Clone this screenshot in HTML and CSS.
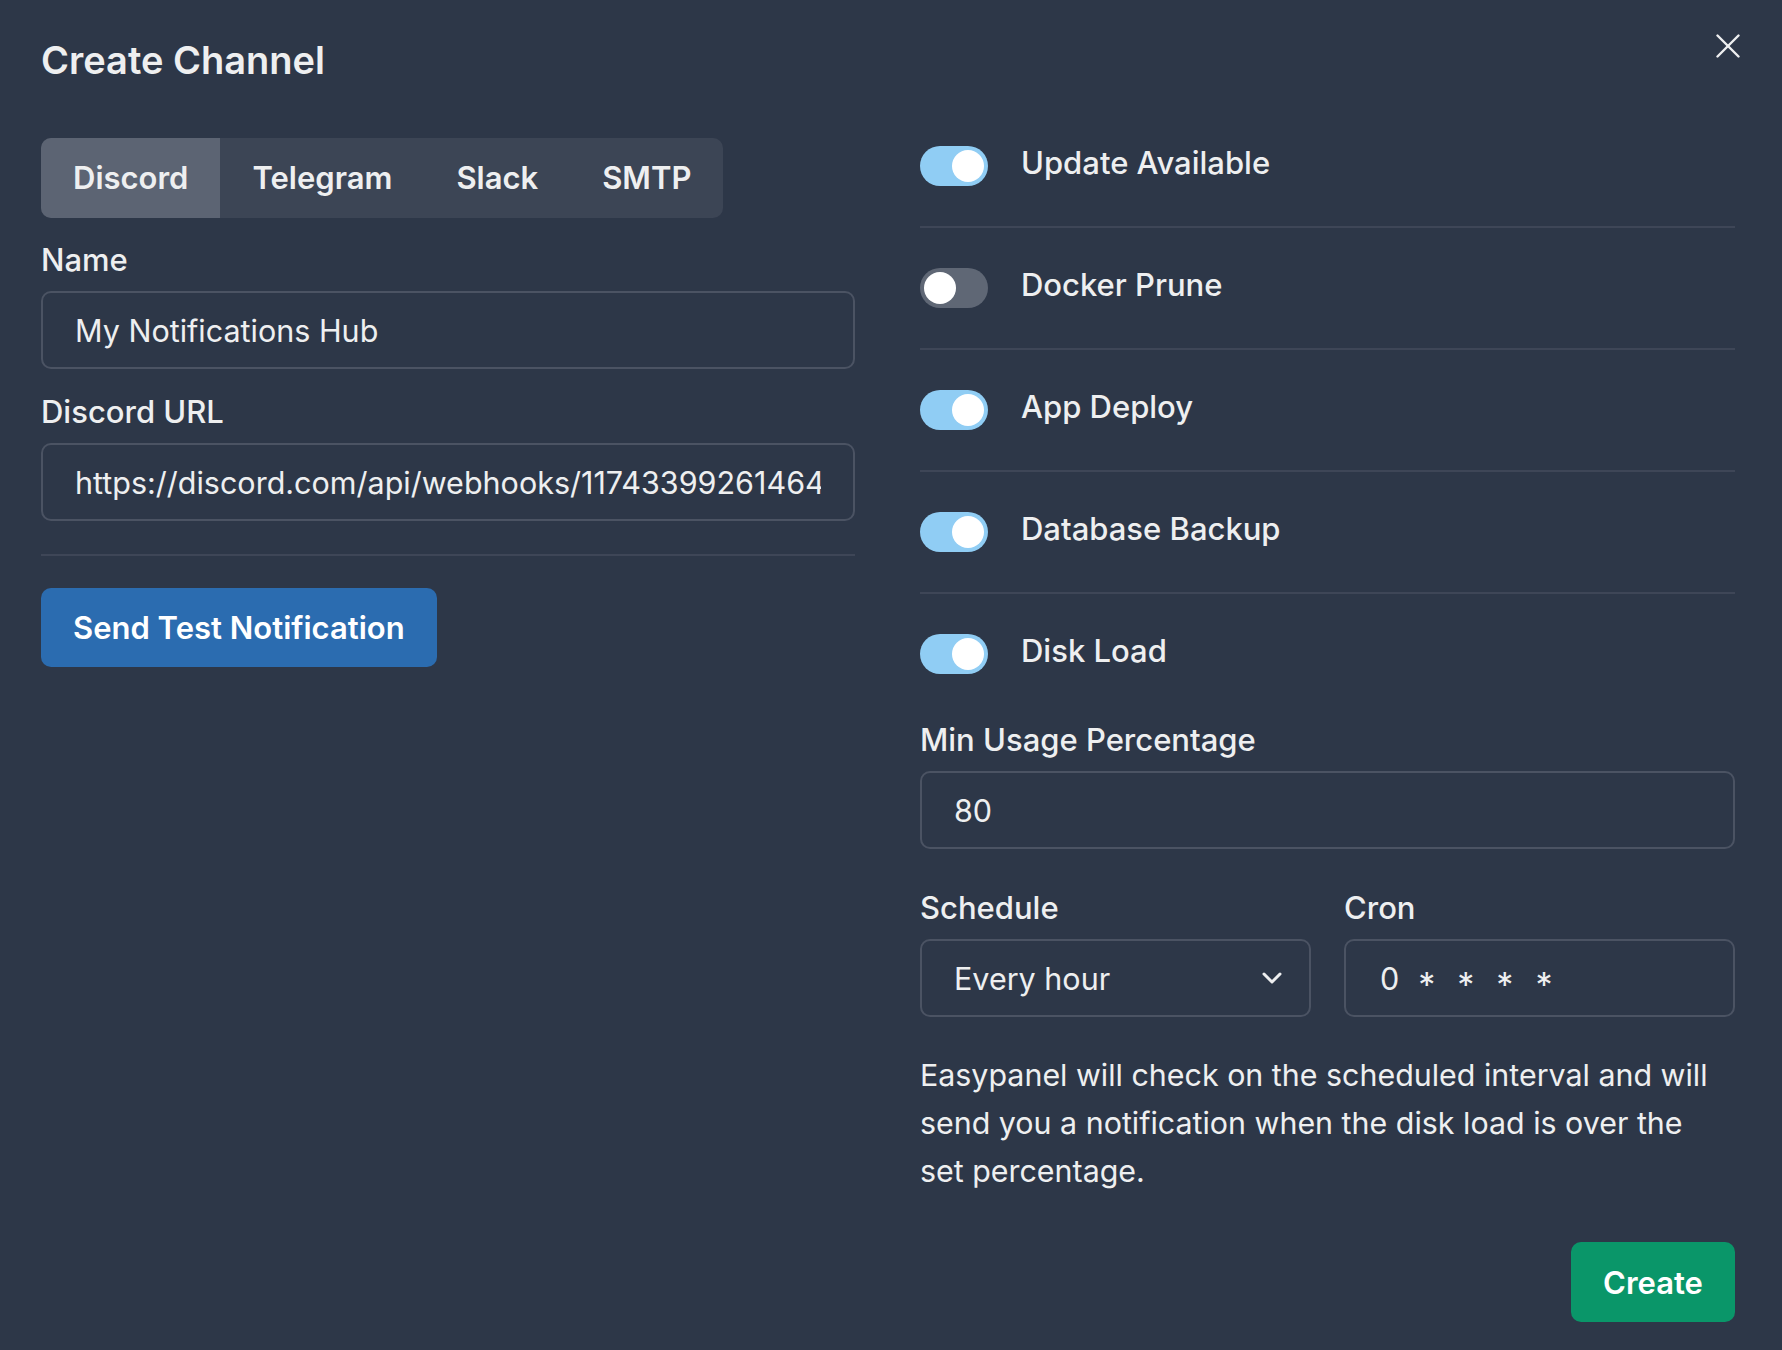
FILE: index.html
```html
<!DOCTYPE html>
<html lang="en">
<head>
<meta charset="utf-8">
<title>Create Channel</title>
<link rel="stylesheet" href="styles.css">
</head>
<body>
<div class="modal">
  <header class="modal-header">
    <h2 class="modal-title">Create Channel</h2>
  </header>
  <button class="close-btn" aria-label="Close">
    <svg width="24" height="24" viewBox="0 0 24 24" fill="none" stroke="currentColor" stroke-width="2.4" stroke-linecap="round"><line x1="1.5" y1="1.5" x2="22.5" y2="22.5"/><line x1="22.5" y1="1.5" x2="1.5" y2="22.5"/></svg>
  </button>
  <div class="modal-body">
    <div class="col col-left">
      <div class="tabs">
        <button class="tab active">Discord</button>
        <button class="tab">Telegram</button>
        <button class="tab">Slack</button>
        <button class="tab">SMTP</button>
      </div>
      <div class="field field-first">
        <label class="label">Name</label>
        <input class="input" type="text" value="My Notifications Hub">
      </div>
      <div class="field">
        <label class="label">Discord URL</label>
        <input class="input" type="text" value="https://discord.com/api/webhooks/1174339926146400000/abcdef">
      </div>
      <hr class="divider divider-left">
      <div class="actions-left">
        <button class="btn btn-blue">Send Test Notification</button>
      </div>
    </div>
    <div class="col col-right">
      <div class="toggle-list">
        <div class="toggle-row">
          <span class="switch on"><span class="knob"></span></span>
          <span class="toggle-label">Update Available</span>
        </div>
        <hr class="divider">
        <div class="toggle-row">
          <span class="switch"><span class="knob"></span></span>
          <span class="toggle-label">Docker Prune</span>
        </div>
        <hr class="divider">
        <div class="toggle-row">
          <span class="switch on"><span class="knob"></span></span>
          <span class="toggle-label">App Deploy</span>
        </div>
        <hr class="divider">
        <div class="toggle-row">
          <span class="switch on"><span class="knob"></span></span>
          <span class="toggle-label">Database Backup</span>
        </div>
        <hr class="divider">
        <div class="toggle-row">
          <span class="switch on"><span class="knob"></span></span>
          <span class="toggle-label">Disk Load</span>
        </div>
      </div>
      <div class="field field-min">
        <label class="label">Min Usage Percentage</label>
        <input class="input" type="text" value="80">
      </div>
      <div class="schedule-grid">
        <div class="field-inner">
          <label class="label">Schedule</label>
          <div class="select">
            <span class="select-value">Every hour</span>
            <svg class="chevron" width="20" height="12" viewBox="0 0 20 12" fill="none" stroke="currentColor" stroke-width="3" stroke-linecap="round" stroke-linejoin="round"><polyline points="2,2 10,10 18,2"/></svg>
          </div>
        </div>
        <div class="field-inner">
          <label class="label">Cron</label>
          <div class="input cron" role="textbox"><span class="cron-part">0</span><span class="cron-part star">*</span><span class="cron-part star">*</span><span class="cron-part star">*</span><span class="cron-part star">*</span></div>
        </div>
      </div>
      <p class="help">Easypanel will check on the scheduled interval and will send you a notification when the disk load is over the set percentage.</p>
      <div class="footer">
        <button class="btn btn-green">Create</button>
      </div>
    </div>
  </div>
</div>
</body>
</html>
```
FILE: styles.css
```css
* { box-sizing: border-box; }
html, body {
  margin: 0;
  padding: 0;
  background: #2d3748;
}
body {
  font-family: Inter, "Noto Sans", "Liberation Sans", sans-serif;
  color: #eeeff0;
  width: 1782px;
  height: 1350px;
  overflow: hidden;
}
.modal {
  position: relative;
  padding: 37px 47px 0 41px;
}
.modal-title {
  margin: 0;
  font-size: 38px;
  line-height: 46px;
  font-weight: 600;
  color: #eeeff0;
}
.close-btn {
  position: absolute;
  top: 34px;
  left: 1716px;
  width: 24px;
  height: 24px;
  padding: 0;
  border: 0;
  background: transparent;
  color: #eeeff0;
  display: flex;
}
.modal-body {
  margin-top: 55px;
  display: grid;
  grid-template-columns: 814px 815px;
  column-gap: 65px;
  align-items: start;
}
.col { display: flex; flex-direction: column; }

/* Tabs */
.tabs {
  display: flex;
  align-self: flex-start;
  background: #3c4555;
  border-radius: 10px;
  overflow: hidden;
  height: 80px;
}
.tab {
  font-family: inherit;
  font-size: 31px;
  font-weight: 600;
  color: #eeeff0;
  background: transparent;
  border: 0;
  padding: 0 32px;
  height: 80px;
  line-height: 80px;
}
.tab.active { background: #5c6473; }

/* Fields */
.field { display: flex; flex-direction: column; margin-top: 20px; }
.field-first { margin-top: 19px; }
.field-inner { display: flex; flex-direction: column; }
.label {
  font-size: 31px;
  line-height: 45px;
  font-weight: 500;
  color: #eeeff0;
  margin-bottom: 9px;
}
.input {
  font-family: inherit;
  font-size: 30.5px;
  color: #eeeff0;
  background: transparent;
  border: 2px solid #4b5363;
  border-radius: 10px;
  height: 78px;
  padding: 0 32px;
  width: 100%;
  outline: none;
}
.cron {
  display: flex;
  align-items: center;
  gap: 19px;
  padding-left: 34px;
}
.cron-part { display: inline-block; }
.star { position: relative; top: 6px; font-size: 34px; }
.star + .star { margin-left: 3px; }

.divider {
  border: 0;
  height: 2px;
  background: #3e4657;
  margin: 0;
  width: 100%;
}
.divider-left { margin-top: 33px; }
.actions-left { margin-top: 32px; }

.btn {
  font-family: inherit;
  font-size: 31px;
  font-weight: 600;
  color: #ffffff;
  border: 0;
  border-radius: 10px;
  height: 79px;
  padding: 0 32px;
}
.btn-blue { background: #2b6cb0; }
.btn-green { background: #0a9669; padding: 0 32px; width: 164px; height: 80px; }

/* Toggles */
.toggle-list { margin-top: 8px; display: flex; flex-direction: column; }
.toggle-list .divider { margin: 40px 0; }
.toggle-row {
  display: flex;
  align-items: center;
  height: 40px;
  gap: 33px;
}
.switch {
  width: 68px;
  height: 40px;
  border-radius: 20px;
  background: #5f6775;
  padding: 4px;
  display: flex;
  justify-content: flex-start;
  flex: none;
}
.switch.on { background: #90cdf4; justify-content: flex-end; }
.knob {
  width: 32px;
  height: 32px;
  border-radius: 50%;
  background: #ffffff;
}
.toggle-label {
  font-size: 31px;
  font-weight: 500;
  line-height: 40px;
  padding-bottom: 7px;
}

.field-min { margin-top: 43px; }
.schedule-grid {
  margin-top: 36px;
  display: grid;
  grid-template-columns: 1fr 1fr;
  column-gap: 33px;
}
.select {
  height: 78px;
  border: 2px solid #4b5363;
  border-radius: 10px;
  padding: 0 27px 0 32px;
  display: flex;
  align-items: center;
  justify-content: space-between;
  font-size: 30.5px;
}
.chevron { color: #eeeff0; }

.help {
  margin: 34px 0 0;
  font-size: 30.4px;
  line-height: 48px;
  max-width: 800px;
  color: #eeeff0;
}
.footer {
  margin-top: 47px;
  display: flex;
  justify-content: flex-end;
}
```
